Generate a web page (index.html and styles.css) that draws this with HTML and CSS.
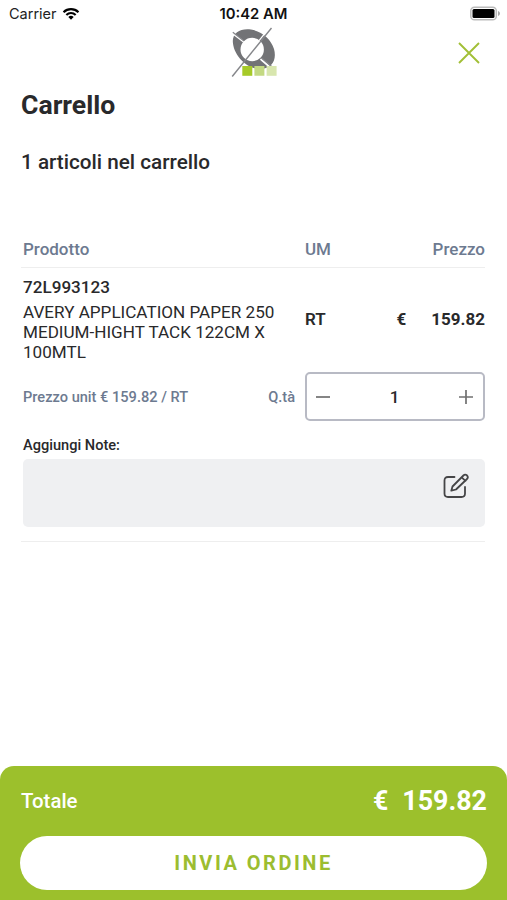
FILE: index.html
```html
<!DOCTYPE html>
<html lang="it">
<head>
<meta charset="utf-8">
<title>Carrello</title>
<link rel="stylesheet" href="styles.css">
</head>
<body>
<div class="screen">
  <div class="status">
    <div class="carrier"><span>Carrier</span>
      <svg class="wifi" viewBox="0 0 18 13" width="18" height="13"><path d="M0.8 4.4a11.8 11.8 0 0 1 16.4 0l-1.5 1.6a9.6 9.6 0 0 0-13.4 0zM3.6 7.2a7.8 7.8 0 0 1 10.8 0l-1.5 1.5a5.6 5.6 0 0 0-7.8 0zM6.3 10a3.9 3.9 0 0 1 5.4 0L9 12.8z"/></svg>
    </div>
    <div class="clock">10:42 AM</div>
    <svg class="battery" viewBox="0 0 32 15" width="32" height="15"><rect x="1.800" y="1.200" width="25.500" height="12.600" rx="3.600" fill="#fff" stroke="#bbb" stroke-width="1.500"/><rect x="3.500" y="3" width="22" height="9" rx="1.500"/><path d="M29 5c2.600 1 2.600 4 0 5z" fill="#aaa"/></svg>
  </div>
  <header class="header">
    <svg class="logo" viewBox="0 0 50 52" width="50" height="52">
      <path fill="#727376" fill-rule="evenodd" d="M2.800 14C3 5.500 11 1 21 2.500C32 4.500 41 12 44 22C47 33 42 41.500 31 42C17 42.500 3 28 2.800 14ZM10.500 22.500A11.700 11.700 0 1 0 33.900 22.500A11.700 11.700 0 1 0 10.500 22.500Z"/>
      <path d="M3.500 7L14 15M30.500 32L42 42" stroke="#fff" stroke-width="1.800"/>
      <path d="M2.800 5.300L14 14M31.500 31L43.500 41" stroke="#85868a" stroke-width="1.200"/>
      <path d="M29 13.700L38.500 2" stroke="#fff" stroke-width="1.200"/>
      <path d="M2.200 49.500L41.500 1" stroke="#85868a" stroke-width="1.400"/>
      <path fill="#a6ca28" d="M12.300 39h10v9.800h-10z"/><path fill="#c3d982" d="M24.400 39h10v9.800h-10z"/><path fill="#d8e6ae" d="M36.600 39h10v9.800h-10z"/>
    </svg>
    <svg class="close" viewBox="0 0 22 22" width="22" height="22"><path d="M1 1L21 21M21 1L1 21"/></svg>
  </header>
  <main class="content">
    <h1>Carrello</h1>
    <h2>1 articoli nel carrello</h2>
    <div class="row heading"><span class="product">Prodotto</span><span class="um">UM</span><span class="amount">Prezzo</span></div>
    <div class="code">72L993123</div>
    <div class="row item"><div class="product">AVERY APPLICATION PAPER 250 MEDIUM-HIGHT TACK 122CM X 100MTL</div><span class="um">RT</span><span class="currency">€</span><span class="amount">159.82</span></div>
    <div class="quantity">
      <span class="unit">Prezzo unit € 159.82 / RT</span><span class="label">Q.tà</span>
      <div class="stepper">
        <svg viewBox="0 0 14 14" width="14" height="14"><path d="M0 7H14"/></svg>
        <span>1</span>
        <svg viewBox="0 0 14 14" width="14" height="14"><path d="M0 7H14M7 0V14"/></svg>
      </div>
    </div>
    <div class="note-title">Aggiungi Note:</div>
    <div class="note"><svg viewBox="0 0 26 26" width="26" height="26"><path d="M11.500 4H5Q1.500 4 1.500 7.500V20.500Q1.500 24 5 24H18.500Q22 24 22 20.500V14"/><path d="M8.300 17.700L9.500 13.500L20.400 2.500Q22 .9 23.900 2.300Q25.700 4.200 24 6L13 16.500ZM18.700 4.300L22.400 7.900"/></svg></div>
    <div class="end-line"></div>
  </main>
  <footer class="footer">
    <div class="total"><span class="total-label">Totale</span><span class="total-currency">€</span><span class="total-value">159.82</span></div>
    <div class="send">INVIA ORDINE</div>
  </footer>
</div>
</body>
</html>
```
FILE: styles.css
```css
* { box-sizing: border-box; }
body { margin: 0; background: #fff; color: #29292b; font-family: Roboto, sans-serif; }
svg { display: block; flex: none; }
.screen { width: 507px; height: 900px; display: flex; flex-direction: column; overflow: hidden; }
.status { height: 27px; padding: 0 6px 0 9px; display: grid; grid-template-columns: 1fr auto 1fr; align-items: center; font: 14.5px/27px Inter, sans-serif; color: #222; }
.carrier { display: flex; align-items: center; gap: 5px; }
.wifi { fill: #000; }
.clock { font-size: 14.8px; font-weight: 600; line-height: 25px; padding-top: 2px; color: #111; margin-right: 3px; }
.battery { justify-self: end; }
.header { height: 53px; padding: 0 27px 0 230px; display: flex; justify-content: space-between; }
.close { margin-top: 15px; fill: none; stroke: #a2bf36; stroke-width: 1.9; }
.content { padding: 0 22px 0 21px; flex: 1; }
h1 { margin: 8px 0 0; font-size: 26.6px; line-height: 33px; font-weight: 700; }
h2 { margin: 28px 0 0; font-size: 20.7px; line-height: 26px; font-weight: 500; }
.row { display: flex; align-items: center; padding-left: 2px; }
.heading { height: 33px; margin-top: 60px; border-bottom: 1px solid #eee; padding-bottom: 5px; font-size: 17px; font-weight: 500; color: #6d7a90; }
.product { width: 282px; flex: none; }
.amount { margin-left: auto; }
.code { margin: 8px 0 0 2px; font-size: 17.1px; line-height: 22px; font-weight: 500; }
.item { margin-top: 4px; font-size: 17.1px; line-height: 20px; height: 60px; }
.item .product { padding-right: 20px; }
.item .um, .item .currency, .item .amount { font-weight: 700; margin-bottom: 26px; font-size: 17px; }
.item .um { font-weight: 600; }
.item .currency { margin-left: auto; }
.item .amount { margin-left: 25px; }
.quantity { margin: 10px 0 0 2px; display: flex; align-items: center; font-size: 14.6px; font-weight: 500; color: #6d7a90; }
.label { margin-left: auto; margin-right: 10px; }
.stepper { width: 180px; height: 49px; border: 2px solid #b8bac4; border-radius: 5px; padding: 0 10px 0 9px; display: flex; align-items: center; justify-content: space-between; color: #29292b; font-size: 17px; }
.stepper svg { stroke: #707070; stroke-width: 1.7; }
.note-title { margin: 14px 0 0 2px; font-size: 14.6px; line-height: 20px; font-weight: 500; }
.note { height: 68px; margin: 4px 0 0 2px; background: #eff0f2; border-radius: 5px; display: flex; justify-content: flex-end; padding: 14px 16px 0 0; }
.note svg { fill: none; stroke: #454547; stroke-width: 1.8; stroke-linejoin: round; stroke-linecap: round; }
.end-line { height: 1px; margin-top: 14px; background: #eee; }
.footer { height: 134px; padding: 18px 20px 10px; background: #9cc02c; border-radius: 14px 14px 0 0; }
.total { height: 34px; display: flex; align-items: center; color: #fff; }
.total-label { margin-left: 1px; font-size: 20.4px; font-weight: 500; }
.total-currency { margin-left: auto; font-size: 26.8px; font-weight: 700; }
.total-value { margin-left: 14px; font-size: 26.8px; font-weight: 700; }
.send { height: 54px; margin-top: 18px; border-radius: 27px; background: #fff; color: #9cbd30; display: flex; align-items: center; justify-content: center; font-size: 20px; font-weight: 700; letter-spacing: 2.5px; }
```
